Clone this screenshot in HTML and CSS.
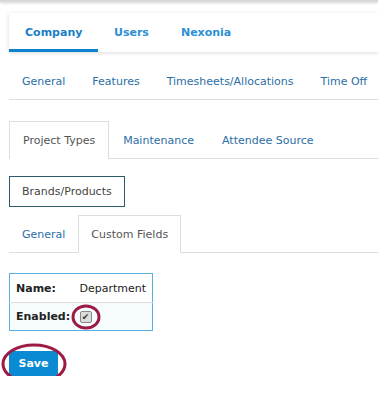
FILE: index.html
```html
<!DOCTYPE html>
<html lang="en">
<head>
    <meta charset="UTF-8">
    <meta name="viewport" content="width=device-width, initial-scale=1.0">
    <title>Company Settings</title>
    <link rel="stylesheet" href="styles.css">
</head>
<body>
    <div class="topbar"></div>
    <div class="page">
        <div class="main-tabs">
            <div class="main-tab active">Company</div>
            <div class="main-tab">Users</div>
            <div class="main-tab">Nexonia</div>
        </div>

        <div class="sub-nav">
            <div class="sub-item">General</div>
            <div class="sub-item">Features</div>
            <div class="sub-item">Timesheets/Allocations</div>
            <div class="sub-item">Time Off</div>
        </div>

        <div class="tabs">
            <div class="tab active">Project Types</div>
            <div class="tab">Maintenance</div>
            <div class="tab">Attendee Source</div>
        </div>

        <div class="pill">Brands/Products</div>

        <div class="tabs tabs-small">
            <div class="tab">General</div>
            <div class="tab active">Custom Fields</div>
        </div>

        <table class="fields">
            <tr>
                <th>Name:</th>
                <td>Department</td>
            </tr>
            <tr class="alt">
                <th>Enabled:</th>
                <td>
                    <span class="check-wrap">
                        <span class="check">&#10004;</span>
                        <svg class="ring ring-check" width="30" height="26" viewBox="0 0 30 26">
                            <ellipse cx="15" cy="13" rx="13" ry="11" fill="none" stroke="#9b1b45" stroke-width="3"/>
                        </svg>
                    </span>
                </td>
            </tr>
        </table>

        <div class="save-wrap">
            <button class="save">Save</button>
            <svg class="ring ring-save" width="66" height="42" viewBox="0 0 66 42">
                <ellipse cx="33" cy="21" rx="31" ry="19" fill="none" stroke="#9b1b45" stroke-width="3"/>
            </svg>
        </div>
    </div>
</body>
</html>
```

FILE: styles.css
```css
* {
    margin: 0;
    padding: 0;
    box-sizing: border-box;
}

body {
    font-family: "DejaVu Sans", Verdana, sans-serif;
    font-size: 11px;
    color: #444;
    background: #fff;
}

.topbar {
    height: 2px;
    background: #d8d8d8;
    box-shadow: 0 1px 3px rgba(0, 0, 0, 0.2);
}

.page {
    padding-left: 9px;
}

.main-tabs {
    display: flex;
    margin-top: 11px;
    height: 39px;
    background: #fff;
    box-shadow: 0 1px 4px rgba(0, 0, 0, 0.15);
}

.main-tab {
    padding: 0 16px;
    line-height: 39px;
    font-size: 11px;
    font-weight: bold;
    color: #2d8fd5;
}

.main-tab.active {
    width: 89px;
    color: #1a7fc6;
    border-bottom: 3px solid #0a84cc;
    height: 39px;
}

.sub-nav {
    display: flex;
    margin-top: 12px;
    height: 36px;
    border-bottom: 1px solid #ddd;
}

.sub-item {
    padding: 0 14px 0 13px;
    line-height: 36px;
    color: #2a6ea6;
    white-space: nowrap;
}

.tabs {
    display: flex;
    margin-top: 21px;
    height: 38px;
    border-bottom: 1px solid #ddd;
}

.tab {
    padding: 0 13px 0 13px;
    line-height: 37px;
    color: #2a6ea6;
    border: 1px solid transparent;
    border-bottom: none;
}

.tab.active {
    color: #555;
    background: #fff;
    border-color: #ddd;
    height: 38px;
}

.tabs-small {
    margin-top: 8px;
}

.tabs-small .tab {
    padding: 0 12px;
}

.pill {
    display: inline-block;
    margin-top: 17px;
    height: 31px;
    line-height: 29px;
    padding: 0 12px;
    border: 1px solid #2e5b6c;
    color: #444;
}

.fields {
    margin-top: 20px;
    border-collapse: collapse;
    border: 1px solid #5aaee2;
}

.fields th {
    width: 64px;
    text-align: left;
    padding: 0 0 0 6px;
    height: 29px;
    color: #222;
    font-weight: bold;
}

.fields td {
    padding: 0 6px;
    color: #222;
}

.fields tr.alt th,
.fields tr.alt td {
    background: #f6fbfe;
    border-top: 1px solid #ddd;
    height: 28px;
}

.check-wrap {
    position: relative;
    display: inline-block;
    vertical-align: middle;
}

.check {
    display: block;
    width: 12px;
    height: 12px;
    border: 1px solid #888;
    border-radius: 2px;
    background: #ddd;
    color: #333;
    font-size: 9px;
    line-height: 10px;
    text-align: center;
}

.ring {
    position: absolute;
    pointer-events: none;
}

.ring-check {
    left: -9px;
    top: -7px;
}

.save-wrap {
    position: relative;
    margin-top: 20px;
}

.save {
    width: 49px;
    height: 25px;
    border: none;
    border-radius: 2px;
    background: #0a8ad3;
    color: #fff;
    font-family: "DejaVu Sans", Verdana, sans-serif;
    font-size: 11px;
    font-weight: bold;
}

.ring-save {
    left: -8px;
    top: -8px;
}
```
